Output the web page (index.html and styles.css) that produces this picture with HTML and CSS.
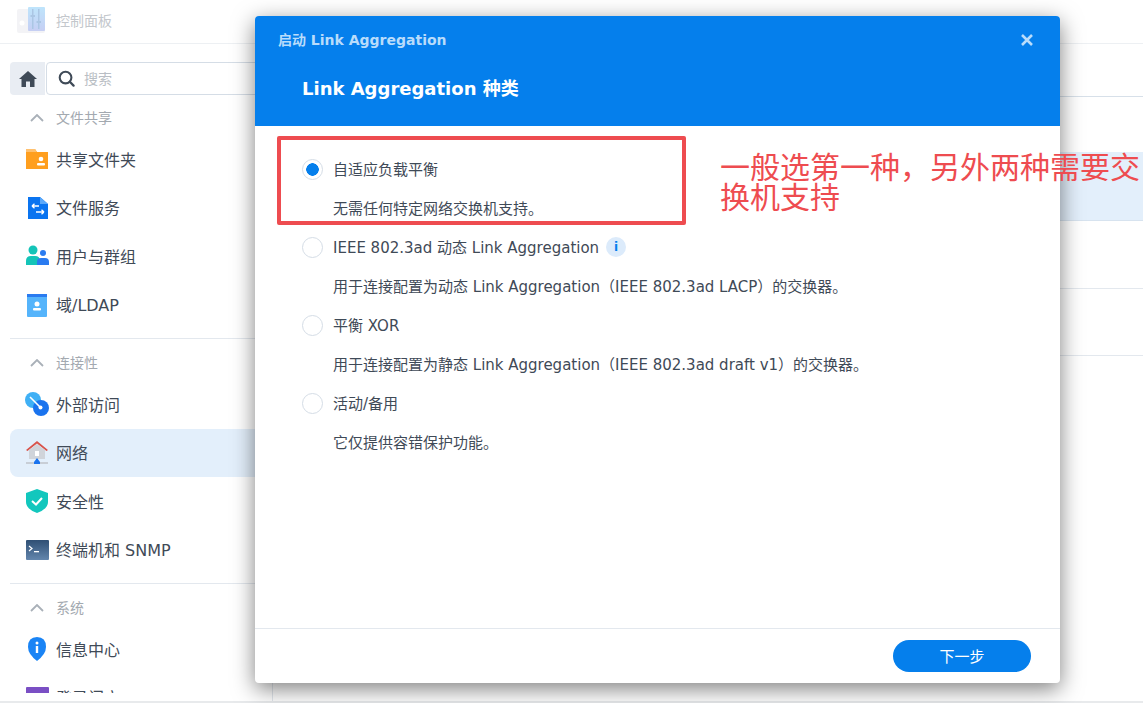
FILE: index.html
```html
<!DOCTYPE html>
<html lang="zh-CN">
<head>
  <meta charset="UTF-8">
  <meta name="viewport" content="width=device-width, initial-scale=1.0">
  <title>控制面板</title>
  <link rel="stylesheet" href="styles.css">
</head>
<body>

  <header class="topbar">
    <svg class="app-logo" viewBox="0 0 28 26" width="28" height="26">
      <defs>
        <linearGradient id="logoBlue" x1="0" y1="0" x2="0" y2="1">
          <stop offset="0" stop-color="#a9dcfb"/>
          <stop offset="1" stop-color="#b3bff0"/>
        </linearGradient>
      </defs>
      <rect x="0" y="2" width="28" height="24" rx="2" fill="#f0f0f3"/>
      <rect x="11" y="0" width="17" height="24" rx="1" fill="url(#logoBlue)"/>
      <rect x="15" y="2" width="1.5" height="20" fill="#8fb3dc"/>
      <rect x="21" y="2" width="1.5" height="20" fill="#8fb3dc"/>
      <rect x="13.5" y="8" width="4.5" height="2" fill="#8fb3dc"/>
      <rect x="19.5" y="14" width="4.5" height="2" fill="#8fb3dc"/>
      <circle cx="5" cy="16" r="2.5" fill="#fff"/>
    </svg>
    <span class="app-title">控制面板</span>
  </header>

  <div class="main">
    <aside class="sidebar">
      <div class="sidebar-scroll">
      <div class="search-row">
        <button class="home-btn">
          <svg viewBox="0 0 18 16" width="18" height="16"><path d="M9 0 L18 8 L15.5 8 L15.5 16 L11 16 L11 10.500 L7 10.500 L7 16 L2.500 16 L2.500 8 L0 8 Z" fill="#3f4a57"/></svg>
        </button>
        <div class="search-box">
          <svg viewBox="0 0 18 18" width="17" height="17"><circle cx="8" cy="8" r="6.200" fill="none" stroke="#3f4a57" stroke-width="2.200"/><path d="M12.500 12.500 L16.500 16.500" stroke="#3f4a57" stroke-width="2.400" stroke-linecap="round"/></svg>
          <span class="search-text">搜索</span>
        </div>
      </div>

      <div class="section-head">
        <svg class="chevron" viewBox="0 0 14 8" width="14" height="8"><path d="M1 7 L7 1 L13 7" fill="none" stroke="#a9b0b8" stroke-width="1.800"/></svg>
        <span>文件共享</span>
      </div>
      <a class="nav-item">
        <svg viewBox="0 0 24 24" width="24" height="24"><path d="M1 2 H10 L12 5 H23 V22 H1 Z" fill="#ff9f1f"/><path d="M1 2 H10 L12 5 H1 Z" fill="#ffc170"/><circle cx="16" cy="12" r="2.300" fill="#fff"/><rect x="12" y="16" width="8" height="2.500" rx="1" fill="#fff"/></svg>
        <span>共享文件夹</span>
      </a>
      <a class="nav-item">
        <svg viewBox="0 0 24 24" width="24" height="24"><path d="M3 1 H15 L23 8 V23 H3 Z" fill="#0a74f0"/><path d="M15 1 L23 8 H15 Z" fill="#5aa8fa"/><path d="M7 10 H14 M7 10 L9.500 7.800 M7 10 L9.500 12.200 M19 16 H11 M19 16 L16.500 13.800 M19 16 L16.500 18.200" fill="none" stroke="#fff" stroke-width="1.400"/></svg>
        <span>文件服务</span>
      </a>
      <a class="nav-item">
        <svg viewBox="0 0 24 24" width="24" height="24"><circle cx="8" cy="6" r="4.500" fill="#14c4b8"/><path d="M1 21 V17 Q1 12 6 12 H10 Q15 12 15 17 V21 Z" fill="#14c4b8"/><circle cx="18" cy="9" r="3" fill="#2a7bf0"/><path d="M12 21 V18 Q12 14 16 14 H20 Q24 14 24 18 V21 Z" fill="#2a7bf0"/></svg>
        <span>用户与群组</span>
      </a>
      <a class="nav-item">
        <svg viewBox="0 0 24 24" width="24" height="24"><rect x="2" y="1" width="20" height="23" rx="1" fill="#55b4fb"/><rect x="2" y="1" width="20" height="3" fill="#2a7bf0"/><circle cx="12" cy="11" r="2.500" fill="#fff"/><rect x="8" y="15" width="8" height="2.500" rx="1" fill="#fff"/></svg>
        <span>域/LDAP</span>
      </a>

      <div class="divider"></div>

      <div class="section-head">
        <svg class="chevron" viewBox="0 0 14 8" width="14" height="8"><path d="M1 7 L7 1 L13 7" fill="none" stroke="#a9b0b8" stroke-width="1.800"/></svg>
        <span>连接性</span>
      </div>
      <a class="nav-item">
        <svg viewBox="0 0 24 24" width="24" height="24"><circle cx="8" cy="8" r="8" fill="#3fb0f5"/><circle cx="16" cy="16" r="8" fill="#1a73ee"/><path d="M5 5 L15 15" stroke="#fff" stroke-width="1.600"/><circle cx="15.500" cy="15.500" r="2" fill="#fff"/></svg>
        <span>外部访问</span>
      </a>
      <a class="nav-item nav-active">
        <svg viewBox="0 0 24 24" width="24" height="24"><path d="M12 0 L23 9 L21.500 10 L12 2.500 L2.500 10 L1 9 Z" fill="#d9534a"/><path d="M4 9 L12 3 L20 9 V18 H4 Z" fill="#d0d4da"/><rect x="10" y="10" width="4" height="5" fill="#fff"/><rect x="1" y="21" width="22" height="2" fill="#c8ced6"/><path d="M12 17 L15 21 H9 Z" fill="#1a73ee"/><rect x="9" y="21" width="6" height="2" fill="#1a73ee"/></svg>
        <span>网络</span>
      </a>
      <a class="nav-item">
        <svg viewBox="0 0 24 24" width="24" height="24"><path d="M12 0 L23 4 V13 Q23 20 12 24 Q1 20 1 13 V4 Z" fill="#12c7bd"/><path d="M7 12 L11 15.500 L17 9" fill="none" stroke="#fff" stroke-width="2"/></svg>
        <span>安全性</span>
      </a>
      <a class="nav-item">
        <svg viewBox="0 0 24 24" width="24" height="24"><defs><linearGradient id="termBg" x1="0" y1="0" x2="0" y2="1"><stop offset="0" stop-color="#2f4f74"/><stop offset="1" stop-color="#6386ad"/></linearGradient></defs><rect x="1" y="2" width="23" height="20" rx="1" fill="url(#termBg)"/><path d="M4 8 L7 10.500 L4 13" fill="none" stroke="#fff" stroke-width="1.200"/><rect x="9" y="13" width="5" height="1.300" fill="#fff"/></svg>
        <span>终端机和 SNMP</span>
      </a>

      <div class="divider"></div>

      <div class="section-head">
        <svg class="chevron" viewBox="0 0 14 8" width="14" height="8"><path d="M1 7 L7 1 L13 7" fill="none" stroke="#a9b0b8" stroke-width="1.800"/></svg>
        <span>系统</span>
      </div>
      <a class="nav-item">
        <svg viewBox="0 0 24 24" width="24" height="24"><path d="M12 0 Q21 0 21 10 Q21 17 12 24 Q3 17 3 10 Q3 0 12 0 Z" fill="#1a84f5"/><circle cx="12" cy="6" r="1.500" fill="#fff"/><rect x="10.800" y="9" width="2.400" height="7" fill="#fff"/></svg>
        <span>信息中心</span>
      </a>
      <a class="nav-item">
        <svg viewBox="0 0 24 24" width="24" height="24"><rect x="1" y="1" width="23" height="23" rx="1" fill="#7a4fc4"/></svg>
        <span>登录门户</span>
      </a>
      </div>
    </aside>

    <section class="content">
      <div class="tab-strip"></div>
      <div class="row row-gap"></div>
      <div class="row row-selected"></div>
      <div class="row row-plain"></div>
      <div class="row row-plain"></div>
    </section>
  </div>
  <div class="page-end"></div>

  <div class="dialog">
    <div class="dialog-head">
      <div class="dialog-bar">
        <span class="dialog-caption">启动 Link Aggregation</span>
        <svg class="dialog-close" viewBox="0 0 12 12" width="12" height="12"><path d="M1 1 L11 11 M11 1 L1 11" stroke="#b9dcfb" stroke-width="2.600"/></svg>
      </div>
      <h2 class="dialog-title">Link Aggregation 种类</h2>
    </div>

    <div class="dialog-body">
      <div class="option">
        <div class="option-line">
          <span class="radio radio-on"></span>
          <span class="option-label">自适应负载平衡</span>
        </div>
        <p class="option-desc">无需任何特定网络交换机支持。</p>
      </div>
      <div class="option">
        <div class="option-line">
          <span class="radio"></span>
          <span class="option-label">IEEE 802.3ad 动态 Link Aggregation</span>
          <span class="info-dot">i</span>
        </div>
        <p class="option-desc">用于连接配置为动态 Link Aggregation（IEEE 802.3ad LACP）的交换器。</p>
      </div>
      <div class="option">
        <div class="option-line">
          <span class="radio"></span>
          <span class="option-label">平衡 XOR</span>
        </div>
        <p class="option-desc">用于连接配置为静态 Link Aggregation（IEEE 802.3ad draft v1）的交换器。</p>
      </div>
      <div class="option">
        <div class="option-line">
          <span class="radio"></span>
          <span class="option-label">活动/备用</span>
        </div>
        <p class="option-desc">它仅提供容错保护功能。</p>
      </div>
    </div>

    <div class="dialog-foot">
      <button class="next-btn">下一步</button>
    </div>
  </div>

  <div class="mark-box"></div>
  <div class="mark-note">一般选第一种，另外两种需要交<br>换机支持</div>

</body>
</html>
```

FILE: styles.css
```css
* {
  box-sizing: border-box;
}

html, body {
  height: 100%;
}

body {
  margin: 0;
  overflow: hidden;
  background: #fff;
  color: #3f4a57;
  font-family: "DejaVu Sans", "Noto Sans CJK SC", sans-serif;
}

.topbar {
  height: 44px;
  padding: 0 0 3px 17px;
  display: flex;
  align-items: center;
  border-bottom: 1px solid #edf0f3;
}

.app-logo {
  margin-right: 11px;
  opacity: 0.75;
}

.app-title {
  font-size: 14px;
  color: #c3c7cc;
}

.main {
  height: 657px;
  display: flex;
  overflow: hidden;
}

.sidebar {
  width: 273px;
  flex: none;
  padding-left: 10px;
  border-right: 1px solid #e3e8ee;
}

.sidebar-scroll {
  height: 649px;
  padding-top: 18px;
  overflow: hidden;
}

.search-row {
  display: flex;
  height: 33px;
  margin-bottom: 5px;
}

.home-btn {
  width: 35px;
  height: 33px;
  padding: 0;
  border: none;
  border-radius: 4px 0 0 4px;
  background: #e9edf3;
  display: flex;
  align-items: center;
  justify-content: center;
}

.search-box {
  flex: 1;
  margin-left: 1px;
  padding-left: 11px;
  display: flex;
  align-items: center;
  gap: 9px;
  border: 1px solid #d5dde6;
  border-radius: 4px;
}

.search-text {
  padding-bottom: 2px;
  font-size: 14px;
  color: #b9bec4;
}

.section-head {
  height: 35px;
  display: flex;
  align-items: center;
  font-size: 14px;
  color: #a3a9b0;
}

.section-head span {
  padding-bottom: 2px;
}

.chevron {
  margin: 0 12px 0 20px;
}

.nav-item {
  height: 48.500px;
  padding-left: 15px;
  display: flex;
  align-items: center;
  gap: 7px;
  font-size: 16px;
  border-radius: 8px 0 0 8px;
}

.nav-item span {
  padding-bottom: 1px;
}

.nav-active {
  background: #e3effb;
}

.divider {
  height: 1px;
  margin: 9px 0 6px;
  background: #e3e8ee;
}

.content {
  flex: 1;
}

.tab-strip {
  height: 53px;
  border-bottom: 1px solid #d7e0e9;
}

.row {
  border-bottom: 1px solid #e3e8ee;
}

.row-gap {
  height: 55px;
  border-bottom: none;
}

.row-selected {
  height: 69px;
  background: #e3effb;
  border-bottom-color: #d7e3ef;
}

.row-plain {
  height: 67.500px;
}

.page-end {
  height: 2px;
  background: #e8eaec;
}

.dialog {
  position: absolute;
  left: 255px;
  top: 16px;
  width: 805px;
  height: 667px;
  display: flex;
  flex-direction: column;
  background: #fff;
  border-radius: 4px;
  box-shadow: 0 6px 22px rgba(0, 0, 0, 0.5);
}

.dialog-head {
  height: 110px;
  flex: none;
  padding: 0 27px 0 23px;
  background: #057fec;
  border-radius: 4px 4px 0 0;
}

.dialog-bar {
  height: 47px;
  display: flex;
  align-items: center;
  justify-content: space-between;
}

.dialog-caption {
  padding-bottom: 2px;
  font-size: 14px;
  font-weight: 700;
  color: #b9dcfb;
}

.dialog-title {
  margin: 0 0 0 24px;
  padding-top: 2px;
  font-size: 18px;
  line-height: 48px;
  font-weight: 700;
  color: #fff;
}

.dialog-body {
  flex: 1;
  padding: 23px 30px 0 47px;
}

.option {
  height: 78px;
}

.option-line {
  height: 40px;
  display: flex;
  align-items: center;
  font-size: 15px;
}

.option-label {
  padding-bottom: 2px;
}

.radio {
  width: 21px;
  height: 21px;
  margin-right: 10px;
  flex: none;
  border: 1px solid #d5dde6;
  border-radius: 50%;
  background: #fff;
}

.radio-on {
  background: radial-gradient(circle, #057fec 0 6px, #fff 6.500px);
}

.info-dot {
  width: 20px;
  height: 20px;
  margin-left: 7px;
  border-radius: 50%;
  background: #dcebfb;
  color: #057fec;
  font-size: 12px;
  font-weight: 700;
  line-height: 20px;
  text-align: center;
}

.option-desc {
  margin: 0 0 0 31px;
  font-size: 15px;
  line-height: 40px;
}

.dialog-foot {
  height: 55px;
  flex: none;
  padding: 11px 29px 0 0;
  display: flex;
  justify-content: flex-end;
  align-items: flex-start;
  border-top: 1px solid #e3e8ee;
}

.next-btn {
  width: 138px;
  height: 32px;
  padding: 0 0 2px;
  border: none;
  border-radius: 16px;
  background: #057fec;
  color: #fff;
  font-family: inherit;
  font-size: 15px;
}

.mark-box {
  position: absolute;
  left: 277px;
  top: 136px;
  width: 409px;
  height: 89px;
  border: 4px solid #ee4c50;
  border-radius: 2px;
}

.mark-note {
  position: absolute;
  left: 720px;
  top: 153px;
  color: #ee4c50;
  font-size: 30px;
  line-height: 30px;
  white-space: nowrap;
}
```
